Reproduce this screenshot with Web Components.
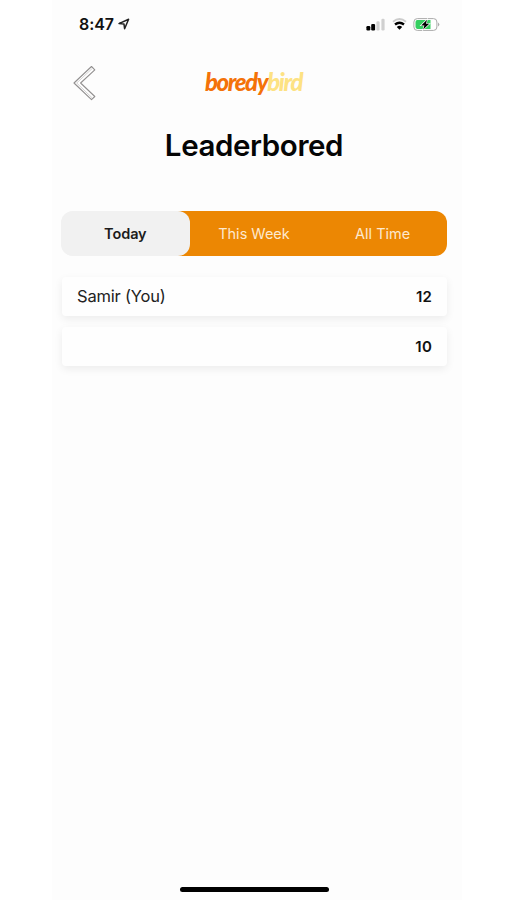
<!DOCTYPE html>
<html lang="en">
<head>
<meta charset="UTF-8">
<title>Leaderbored</title>
<style>
    body {
        margin: 0;
        background: #fff;
        font-family: Inter, "Liberation Sans", sans-serif;
        color: #111;
    }
</style>
</head>
<body>
<phone-screen>
    <status-bar slot="status" time="8:47"></status-bar>
    <app-header></app-header>
    <page-title>Leaderbored</page-title>
    <tab-switch tabs="Today,This Week,All Time" active="0"></tab-switch>
    <score-list>
        <score-row score="12">Samir (You)</score-row>
        <score-row score="10"></score-row>
    </score-list>
</phone-screen>

<script>
class PhoneScreen extends HTMLElement {
    constructor() {
        super();
        this.attachShadow({ mode: 'open' });
        this.shadowRoot.innerHTML = `
            <style>
                :host {
                    display: flex;
                    flex-direction: column;
                    box-sizing: border-box;
                    width: 410px;
                    height: 900px;
                    margin-left: 52px;
                    background: #fdfdfd;
                }
                main { flex: 1; padding: 0 15px 0 9px; }
                .home {
                    width: 149px;
                    height: 5px;
                    margin: 0 0 8px 128px;
                    border-radius: 3px;
                    background: #000;
                }
            </style>
            <slot name="status"></slot>
            <main><slot></slot></main>
            <div class="home"></div>
        `;
    }
}

class StatusBar extends HTMLElement {
    constructor() {
        super();
        this.attachShadow({ mode: 'open' });
        const time = this.getAttribute('time') || '9:41';

        this.shadowRoot.innerHTML = `
            <style>
                :host {
                    display: flex;
                    align-items: center;
                    box-sizing: border-box;
                    height: 48px;
                    padding: 0 22px 0 27px;
                }
                .time { font-size: 16px; font-weight: 600; letter-spacing: -0.1px; }
                .arrow { margin-left: 4px; }
                .icons { display: flex; align-items: center; margin-left: auto; }
                svg { display: block; }
                .wifi { margin: 0 6px 0 7px; }
            </style>
            <span class="time">${time}</span>
            <svg class="arrow" width="12" height="12" viewBox="0 0 12 12">
                <path d="M1 5.6 10.6 1.3 6.6 10.7 6 6.1Z" fill="none" stroke="#222" stroke-width="1.5" stroke-linejoin="round"/>
            </svg>
            <div class="icons">
                <svg width="19" height="13" viewBox="0 0 19 13">
                    <rect x="0.4" y="8" width="3.9" height="4.4" rx="1.2" fill="#000"/>
                    <rect x="5.2" y="5.9" width="3.9" height="6.5" rx="1.2" fill="#000"/>
                    <rect x="10.4" y="3.2" width="3.2" height="9.2" rx="1.2" fill="#d0d0d0"/>
                    <rect x="15.4" y="0.8" width="3.2" height="11.6" rx="1.2" fill="#d0d0d0"/>
                </svg>
                <svg class="wifi" width="15" height="12" viewBox="0 0 15 12">
                    <path d="M1 3.7Q7.5-1.5 14 3.7" fill="none" stroke="#ccc" stroke-width="1.9"/>
                    <path d="M3 6.5Q7.5 2.9 12 6.5" fill="none" stroke="#000" stroke-width="2.4"/>
                    <path d="M4.8 8.9Q7.5 6.8 10.2 8.9L7.5 11.8Z" fill="#000"/>
                </svg>
                <svg width="27" height="13" viewBox="0 0 27 13">
                    <rect x="0.9" y="0.6" width="23" height="11.8" rx="3.4" fill="#fff" stroke="#aaa"/>
                    <path d="M25.2 4.4Q27.4 6.5 25.2 8.6Z" fill="#999"/>
                    <path d="M4.3 2.1H17.5V10.9H4.3Q2.5 10.9 2.5 9.1V3.9Q2.5 2.1 4.3 2.1Z" fill="#35cf60"/>
                    <path d="M14 1.8 8.2 7.4H11.4L10.2 11.4 16.2 5.8H13Z" fill="#000" stroke="#fff" stroke-width="1.3" paint-order="stroke"/>
                </svg>
            </div>
        `;
    }
}

class AppHeader extends HTMLElement {
    constructor() {
        super();
        this.attachShadow({ mode: 'open' });
        this.shadowRoot.innerHTML = `
            <style>
                :host {
                    display: grid;
                    grid-template-columns: 1fr auto 1fr;
                    align-items: center;
                    height: 70px;
                }
                .back { display: block; margin-left: 11px; }
                .logo {
                    font: italic 900 24px/30px Lato, sans-serif;
                    letter-spacing: -1.4px;
                    color: #f47208;
                    margin: -2px 0 0 -1px;
                }
                .logo span { color: #fde283; }
            </style>
            <svg class="back" width="26" height="38" viewBox="0 0 26 38">
                <path d="M19.5 2.5 22.8 5.8 8.6 19 22.8 32.5 19.5 35.7 2 19Z" fill="#fff" stroke="#929090" stroke-width="1.1" stroke-linejoin="round"/>
                <path d="M20 4.7 4.7 19 20 33.7" fill="none" stroke="#c9c7c7" stroke-width="0.8"/>
            </svg>
            <div class="logo">boredy<span>bird</span></div>
        `;
    }
}

class PageTitle extends HTMLElement {
    constructor() {
        super();
        this.attachShadow({ mode: 'open' });
        this.shadowRoot.innerHTML = `
            <style>
                :host {
                    display: block;
                    height: 93px;
                    font-size: 29.5px;
                    font-weight: 600;
                    line-height: 54px;
                    letter-spacing: -0.4px;
                    text-align: center;
                    color: #050505;
                }
            </style>
            <slot></slot>
        `;
    }
}

class TabSwitch extends HTMLElement {
    constructor() {
        super();
        this.attachShadow({ mode: 'open' });
        const tabs = (this.getAttribute('tabs') || '').split(',');
        const active = Number(this.getAttribute('active') || 0);

        this.shadowRoot.innerHTML = `
            <style>
                :host {
                    display: grid;
                    grid-template-columns: repeat(3, 1fr);
                    height: 45px;
                    border-radius: 12px;
                    overflow: hidden;
                    /* gray start keeps orange from bleeding around the first tab */
                    background: linear-gradient(90deg, #f1f1f1 60px, #ec8703 60px);
                }
                .tab {
                    display: flex;
                    align-items: center;
                    justify-content: center;
                    font-size: 14.5px;
                    color: #fde9cf;
                }
                .active {
                    border-radius: 12px;
                    background: #f1f1f1;
                    color: #1c1c1c;
                    font-weight: 600;
                    letter-spacing: -0.1px;
                }
            </style>
            ${tabs.map((t, i) => `<div class="tab ${i === active ? 'active' : ''}">${t}</div>`).join('')}
        `;
    }
}

class ScoreList extends HTMLElement {
    constructor() {
        super();
        this.attachShadow({ mode: 'open' });
        this.shadowRoot.innerHTML = `
            <style>
                :host {
                    display: flex;
                    flex-direction: column;
                    gap: 11px;
                    padding: 21px 0 0 1px;
                }
            </style>
            <slot></slot>
        `;
    }
}

class ScoreRow extends HTMLElement {
    constructor() {
        super();
        this.attachShadow({ mode: 'open' });
        const score = this.getAttribute('score') || '0';

        this.shadowRoot.innerHTML = `
            <style>
                :host {
                    display: flex;
                    align-items: center;
                    justify-content: space-between;
                    box-sizing: border-box;
                    height: 39px;
                    padding: 0 15px;
                    border-radius: 4px;
                    background: #fefefe;
                    box-shadow: 0 3px 8px rgba(0, 0, 0, 0.07);
                    font-size: 16.5px;
                    line-height: 20px;
                    letter-spacing: -0.2px;
                    color: #222;
                }
                .name { padding-bottom: 1px; }
                .score { font-size: 15px; font-weight: 600; letter-spacing: 0.2px; color: #111; }
            </style>
            <span class="name"><slot></slot></span>
            <span class="score">${score}</span>
        `;
    }
}

customElements.define('phone-screen', PhoneScreen);
customElements.define('status-bar', StatusBar);
customElements.define('app-header', AppHeader);
customElements.define('page-title', PageTitle);
customElements.define('tab-switch', TabSwitch);
customElements.define('score-list', ScoreList);
customElements.define('score-row', ScoreRow);
</script>
</body>
</html>
